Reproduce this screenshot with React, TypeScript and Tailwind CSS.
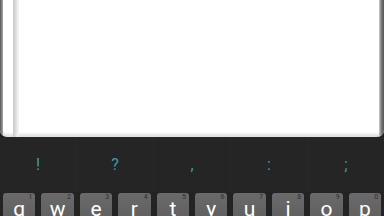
import React from 'react';

const suggestions = ['!', '?', ',', ':', ';'];
const keys = [
  { k: 'q', n: '1' },
  { k: 'w', n: '2' },
  { k: 'e', n: '3' },
  { k: 'r', n: '4' },
  { k: 't', n: '5' },
  { k: 'y', n: '6' },
  { k: 'u', n: '7' },
  { k: 'i', n: '8' },
  { k: 'o', n: '9' },
  { k: 'p', n: '0' },
];

const App: React.FC = () => {
  return (
    <div className="w-[384px] h-[216px] overflow-hidden bg-[#232323] flex flex-col font-['Roboto',sans-serif]">
      {/* text area */}
      <div className="h-[137px] shrink-0 bg-[#1c1c1c] flex">
        <div className="flex-1 flex bg-white rounded-b-[7px] overflow-hidden shadow-[inset_0_-3px_3px_rgba(0,0,0,0.12)]">
          <div className="w-[3px] bg-gradient-to-r from-[#555] to-[#aaa]" />
          <div className="w-[10px]" />
          <div className="w-[4px] bg-gradient-to-r from-[#c8c8c8] to-[#e6e6e6]" />
          <div className="w-[2px] bg-[#f0f0f0]" />
          <div className="flex-1" />
          <div className="w-[5px] bg-gradient-to-r from-[#d0d0d0] via-[#777] to-[#555]" />
        </div>
      </div>

      {/* suggestion strip */}
      <div className="h-[55px] shrink-0 flex bg-[#252525]">
        {suggestions.map((s, i) => (
          <div
            key={i}
            className={`flex-1 flex items-center justify-center text-[16px] text-[#3a9ea3] ${
              i < suggestions.length - 1 ? 'border-r border-[#292929]' : ''
            }`}
          >
            {s}
          </div>
        ))}
      </div>

      {/* keyboard row */}
      <div className="shrink-0 flex gap-[6px] px-[3px] pt-[1px]">
        {keys.map(({ k, n }) => (
          <div
            key={k}
            className="relative w-[32.6px] h-[40px] rounded-[3px] bg-gradient-to-b from-[#6a6a6a] to-[#5a5a5a] flex justify-center"
          >
            <span className="absolute top-[1px] right-[3px] text-[7px] leading-none text-[#2e2e2e]">{n}</span>
            <span className="mt-[6px] text-[21px] leading-none text-white">{k}</span>
          </div>
        ))}
      </div>
    </div>
  );
};

export default App;
